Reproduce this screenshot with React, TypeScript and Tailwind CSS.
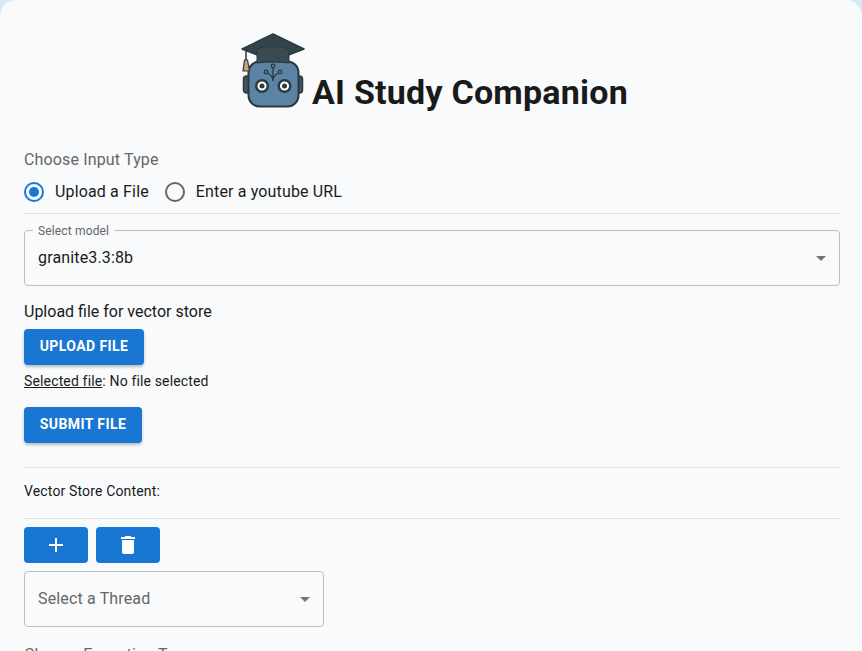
const font = { fontFamily: 'Roboto, sans-serif' }

function Caret() {
  return (
    <svg width="24" height="24" viewBox="0 0 24 24" className="fill-[#757575]">
      <path d="M7 10l5 5 5-5z" />
    </svg>
  )
}

function RobotLogo() {
  return (
    <svg width="66" height="76" viewBox="0 0 66 76">
      <rect x="3.500" y="44" width="7" height="17" rx="3" fill="#46555c" stroke="#2b3a41" strokeWidth="1.500" />
      <rect x="55.500" y="44" width="7" height="17" rx="3" fill="#46555c" stroke="#2b3a41" strokeWidth="1.500" />
      <rect x="8.500" y="29.500" width="50" height="45" rx="11" fill="#5b83a3" stroke="#2b3a41" strokeWidth="2" />
      <path d="M33 2 64 17 33 29 2 17z" fill="#33434b" stroke="#2b3a41" strokeWidth="1.500" strokeLinejoin="round" />
      <path d="M17 31v-11q0-4 4-4.500 12-2 24 0 4 .5 4 4.500v11q-16-3-32 0z" fill="#3b4a50" stroke="#2b3a41" strokeWidth="1" />
      <path d="M6 18v11" stroke="#2b3a41" strokeWidth="1.500" />
      <path d="M4.500 28h3l2 11h-6.500z" fill="#c9a271" stroke="#2b3a41" strokeWidth="1.200" />
      <circle cx="22" cy="54" r="5.800" fill="#fff" stroke="#2b3a41" strokeWidth="2.500" />
      <circle cx="22" cy="54" r="2.500" fill="#2b3a41" />
      <circle cx="44.500" cy="54" r="5.800" fill="#fff" stroke="#2b3a41" strokeWidth="2.500" />
      <circle cx="44.500" cy="54" r="2.500" fill="#2b3a41" />
      <g fill="none" stroke="#2b3a41" strokeWidth="1.300">
        <path d="M33 36v13M33 49q0-5-5-7.500M33 49q0-5 5-7.500" />
        <circle cx="33" cy="34" r="1.800" />
        <circle cx="26" cy="40" r="1.800" />
        <circle cx="40" cy="40" r="1.800" />
      </g>
    </svg>
  )
}

export default function App() {
  return (
    <div className="h-[651px] w-[862px] overflow-hidden bg-[#d6e9f5]" style={font}>
      <div className="h-full rounded-t-2xl bg-[#f8fafc] pr-[22px] pl-6 tracking-[0.15px] text-[#1a1a1a]">
        <div className="flex h-[117px] items-end justify-center pb-[9px] pl-[4px]">
          <RobotLogo />
          <h1 className="ml-[6px] -mb-[4px] text-[34px] leading-[40px] font-bold tracking-[0.22px]">AI Study Companion</h1>
        </div>

        <p className="mt-[31px] text-base leading-6 text-[#666]">Choose Input Type</p>
        <div className="mt-[8px] flex h-6 items-center text-base">
          <span className="flex h-[20px] w-[20px] items-center justify-center rounded-full border-2 border-[#1976d2]">
            <span className="h-[10px] w-[10px] rounded-full bg-[#1976d2]" />
          </span>
          <span className="ml-[11px]">Upload a File</span>
          <span className="ml-[16px] h-[20px] w-[20px] rounded-full border-2 border-[#666]" />
          <span className="ml-[11px]">Enter a youtube URL</span>
        </div>
        <div className="mt-[9px] h-px bg-[#e0e0e0]" />

        <div className="relative mt-[16px] flex h-[56px] items-center justify-between rounded border border-[#bdbdbd] pr-[6px] pl-[13px]">
          <span className="absolute -top-[7px] left-[8px] bg-[#f8fafc] px-[5px] text-xs leading-[14px] text-[#666]">Select model</span>
          <span className="text-base">granite3.3:8b</span>
          <Caret />
        </div>

        <p className="mt-[14px] text-base leading-6 tracking-normal">Upload file for vector store</p>
        <button className="mt-[5px] block h-9 w-[120px] rounded bg-[#1976d2] pb-[2px] text-sm font-bold tracking-[0.4px] text-white uppercase shadow-[0_2px_3px_rgba(0,0,0,0.25)]">Upload file</button>
        <p className="mt-[6px] text-sm leading-5">
          <span className="underline">Selected file</span>: No file selected
        </p>
        <button className="mt-[16px] block h-9 w-[118px] rounded bg-[#1976d2] pb-[2px] text-sm font-bold tracking-[0.4px] text-white uppercase shadow-[0_2px_3px_rgba(0,0,0,0.25)]">Submit file</button>

        <div className="mt-[24px] h-px bg-[#e0e0e0]" />
        <p className="mt-[13px] text-sm leading-5">Vector Store Content:</p>
        <div className="mt-[17px] h-px bg-[#e0e0e0]" />

        <div className="mt-2 flex gap-2">
          <button className="flex h-9 w-16 items-center justify-center rounded bg-[#1976d2] text-white">
            <svg width="24" height="24" viewBox="0 0 24 24" fill="#fff">
              <path d="M19 13h-6v6h-2v-6H5v-2h6V5h2v6h6v2z" />
            </svg>
          </button>
          <button className="flex h-9 w-16 items-center justify-center rounded bg-[#1976d2] text-white">
            <svg width="24" height="24" viewBox="0 0 24 24" fill="#fff">
              <path d="M6 19c0 1.100.9 2 2 2h8c1.100 0 2-.9 2-2V7H6v12zM19 4h-3.500l-1-1h-5l-1 1H5v2h14V4z" />
            </svg>
          </button>
        </div>

        <div className="mt-2 flex h-14 w-[300px] items-center justify-between rounded border border-[#bdbdbd] pr-[6px] pl-[13px]">
          <span className="text-base text-[#666]">Select a Thread</span>
          <Caret />
        </div>

        <p className="mt-[16px] text-base leading-6 text-[#666]">Choose Execution Type</p>
      </div>
    </div>
  )
}
